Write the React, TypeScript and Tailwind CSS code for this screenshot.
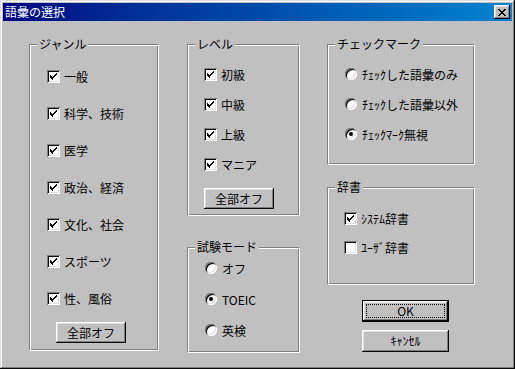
import React from "react";

const font = { fontFamily: '"Noto Sans CJK JP", "Noto Sans", sans-serif' };

function Check({ checked }: { checked: boolean }) {
  return (
    <div className="w-[13px] h-[13px] bg-white shrink-0 flex items-center justify-center shadow-[inset_1px_1px_#808080,inset_-1px_-1px_#ffffff,inset_2px_2px_#0a0a0a,inset_-2px_-2px_#dfdfdf]">
      {checked && (
        <svg width="7" height="7" viewBox="0 0 7 7" shapeRendering="crispEdges">
          <path d="M6 0h1v1H6zM5 1h2v1H5zM0 2h1v1H0zM4 2h2v1H4zM0 3h2v1H0zM3 3h2v1H3zM0 4h4v1H0zM1 5h2v1H1zM2 6h1v1H2z" fill="#000" />
        </svg>
      )}
    </div>
  );
}

function Radio({ checked }: { checked: boolean }) {
  return (
    <div className="w-[12px] h-[12px] rounded-full bg-white shrink-0 flex items-center justify-center shadow-[inset_1px_1px_#808080,inset_-1px_-1px_#ffffff,inset_2px_2px_#0a0a0a,inset_-2px_-2px_#dfdfdf]">
      {checked && <div className="w-[4px] h-[4px] rounded-full bg-black" />}
    </div>
  );
}

function Button({ label, className, isDefault }: { label: string; className: string; isDefault?: boolean }) {
  if (isDefault) {
    return (
      <div className={`border border-black bg-[#c0c0c0] ${className}`}>
        <div className="w-full h-full p-[3px] shadow-[inset_-1px_-1px_#0a0a0a,inset_1px_1px_#ffffff,inset_-2px_-2px_#808080,inset_2px_2px_#dfdfdf]">
          <div className="w-full h-full border border-dotted border-black flex items-center justify-center text-[12px] leading-none text-black">
            {label}
          </div>
        </div>
      </div>
    );
  }
  return (
    <div className={`bg-[#c0c0c0] flex items-center justify-center text-[12px] leading-none text-black shadow-[inset_-1px_-1px_#0a0a0a,inset_1px_1px_#ffffff,inset_-2px_-2px_#808080,inset_2px_2px_#dfdfdf] ${className}`}>
      {label}
    </div>
  );
}

function Group({ label, className, children }: { label: string; className: string; children: React.ReactNode }) {
  return (
    <div className={`relative border border-[#808080] border-r-white border-b-white shadow-[inset_1px_1px_#ffffff,inset_-1px_-1px_#808080] ${className}`}>
      <span className="absolute left-[7px] top-[-8px] px-[2px] bg-[#c0c0c0] text-[12px] leading-[14px] text-black">
        {label}
      </span>
      {children}
    </div>
  );
}

function CheckRow({ label, checked = true }: { label: string; checked?: boolean }) {
  return (
    <div className="flex items-center h-[13px] gap-[4px]">
      <Check checked={checked} />
      <span className="text-[12px] leading-[13px] text-black whitespace-nowrap">{label}</span>
    </div>
  );
}

function RadioRow({ label, checked = false }: { label: string; checked?: boolean }) {
  return (
    <div className="flex items-center h-[12px] gap-[5px]">
      <Radio checked={checked} />
      <span className="text-[12px] leading-[13px] text-black whitespace-nowrap">{label}</span>
    </div>
  );
}

export default function App() {
  return (
    <div style={font} className="w-[515px] h-[369px] bg-[#c0c0c0] p-[3px] flex flex-col shadow-[inset_-1px_-1px_#0a0a0a,inset_1px_1px_#dfdfdf,inset_-2px_-2px_#808080,inset_2px_2px_#ffffff]">
      <div className="h-[18px] flex items-center justify-between pl-[2px] pr-[2px] bg-gradient-to-r from-[#000080] to-[#1084d0]">
        <span className="text-white text-[12px] leading-none">語彙の選択</span>
        <div className="w-[16px] h-[14px] bg-[#c0c0c0] flex items-center justify-center shadow-[inset_-1px_-1px_#0a0a0a,inset_1px_1px_#ffffff,inset_-2px_-2px_#808080,inset_2px_2px_#dfdfdf]">
          <svg width="8" height="7" viewBox="0 0 8 7" shapeRendering="crispEdges">
            <path d="M0 0h2v1H0zM6 0h2v1H6zM1 1h2v1H1zM5 1h2v1H5zM2 2h4v1H2zM3 3h2v1H3zM2 4h4v1H2zM1 5h2v1H1zM5 5h2v1H5zM0 6h2v1H0zM6 6h2v1H6z" fill="#000" />
          </svg>
        </div>
      </div>
      <div className="flex pl-[26px] pt-[23px]">
        <Group label="ジャンル" className="w-[130px] h-[307px] pl-[17px] pt-[25px]">
          <div className="flex flex-col gap-[24px]">
            <CheckRow label="一般" />
            <CheckRow label="科学、技術" />
            <CheckRow label="医学" />
            <CheckRow label="政治、経済" />
            <CheckRow label="文化、社会" />
            <CheckRow label="スポーツ" />
            <CheckRow label="性、風俗" />
          </div>
          <Button label="全部オフ" className="ml-[9px] mt-[17px] w-[70px] h-[21px]" />
        </Group>
        <div className="ml-[28px] flex flex-col">
          <Group label="レベル" className="w-[113px] h-[172px] pl-[16px] pt-[23px]">
            <div className="flex flex-col gap-[17px]">
              <CheckRow label="初級" />
              <CheckRow label="中級" />
              <CheckRow label="上級" />
              <CheckRow label="マニア" />
            </div>
            <Button label="全部オフ" className="mt-[17px] w-[70px] h-[21px]" />
          </Group>
          <Group label="試験モード" className="mt-[31px] w-[113px] h-[106px] pl-[17px] pt-[14px]">
            <div className="flex flex-col gap-[19px]">
              <RadioRow label="オフ" />
              <RadioRow label="TOEIC" checked />
              <RadioRow label="英検" />
            </div>
          </Group>
        </div>
        <div className="ml-[27px] flex flex-col">
          <Group label="チェックマーク" className="w-[148px] h-[121px] pl-[17px] pt-[23px]">
            <div className="flex flex-col gap-[18px]">
              <RadioRow label="ﾁｪｯｸした語彙のみ" />
              <RadioRow label="ﾁｪｯｸした語彙以外" />
              <RadioRow label="ﾁｪｯｸﾏｰｸ無視" checked />
            </div>
          </Group>
          <Group label="辞書" className="mt-[22px] w-[148px] h-[98px] pl-[16px] pt-[24px]">
            <div className="flex flex-col gap-[16px]">
              <CheckRow label="ｼｽﾃﾑ辞書" />
              <CheckRow label="ﾕｰｻﾞ辞書" checked={false} />
            </div>
          </Group>
          <Button isDefault label="OK" className="ml-[35px] mt-[15px] w-[87px] h-[22px]" />
          <Button label="ｷｬﾝｾﾙ" className="ml-[35px] mt-[8px] w-[87px] h-[22px]" />
        </div>
      </div>
    </div>
  );
}
